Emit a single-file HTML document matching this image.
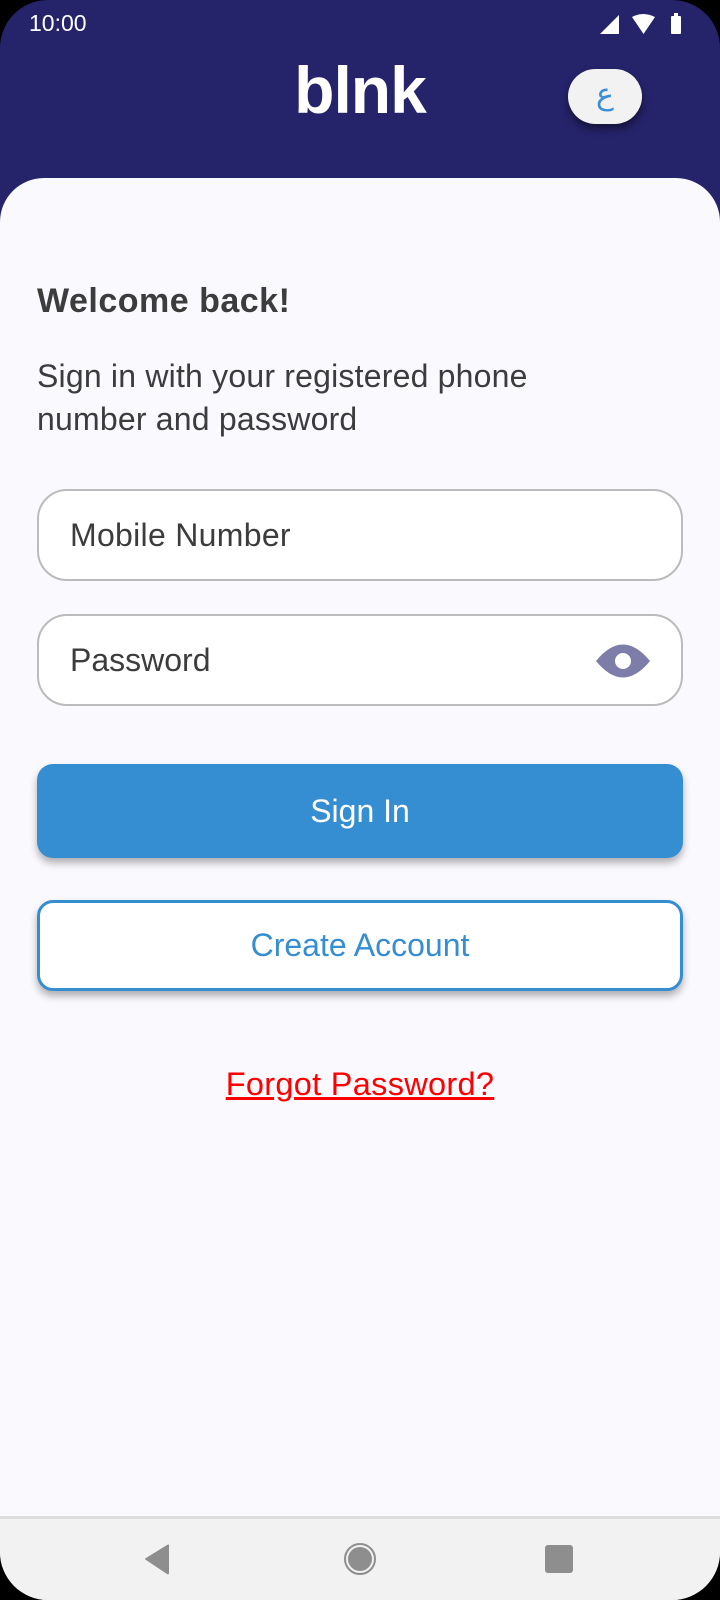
<!DOCTYPE html>
<html><head><meta charset="utf-8"><style>
*{margin:0;padding:0;box-sizing:border-box}
body{width:720px;height:1600px;overflow:hidden;background:#000;font-family:"Liberation Sans",sans-serif}
.screen{position:relative;width:720px;height:1600px;background:#25236a;border-radius:48px 48px 48px 48px;overflow:hidden}
.time{position:absolute;left:29px;top:10px;color:#fff;font-size:23px}
.card{position:absolute;left:0;top:178px;width:720px;height:1422px;background:#f9f9fe;border-radius:44px 44px 0 0}
.logo{position:absolute;left:0;width:720px;top:52px;text-align:center;color:#fff;font-size:66px;font-weight:bold;letter-spacing:-1px}
.lang{position:absolute;left:568px;top:69px;width:74px;height:55px;border-radius:28px;background:#f2f2f2;box-shadow:0 5px 8px rgba(0,0,0,.45);color:#3a8ed6;font-size:30px;text-align:center;line-height:52px;font-family:"DejaVu Sans",sans-serif}
.t{position:absolute;left:37px;color:#3c3c3c}
.inp{position:absolute;left:37px;width:646px;height:92px;border:2px solid #bbb;border-radius:30px;background:#fff;font-size:32px;color:#3c3c3c;padding-left:31px;line-height:88px}
.btn{position:absolute;left:37px;width:646px;border-radius:16px;text-align:center;font-size:32px}
.nav{position:absolute;left:0;top:1516px;width:720px;height:84px;background:#f2f2f2;border-top:3px solid #ddd}
</style></head><body><div class="screen">
<div class="time">10:00</div>
<svg style="position:absolute;left:598px;top:13px" width="86" height="22" viewBox="0 0 86 22">
<polygon points="2,21 21,2 21,21" fill="#fff"/>
<path d="M34 4 Q45 -2 57 4 L45.5 21 Z" fill="#fff"/>
<rect x="73" y="3" width="10" height="18" rx="1" fill="#fff"/><rect x="76" y="0" width="4" height="4" fill="#fff"/>
</svg>
<div class="logo">blnk</div>
<div class="lang">ع</div>
<div class="card"></div>
<div class="t" style="top:282px;font-size:34px;font-weight:bold;color:#3c3c3c;letter-spacing:0.5px">Welcome back!</div>
<div class="t" style="top:355px;font-size:32px;line-height:43px;letter-spacing:0.2px">Sign in with your registered phone<br>number and password</div>
<div class="inp" style="top:489px;letter-spacing:0.3px">Mobile Number</div>
<div class="inp" style="top:614px">Password
<svg style="position:absolute;left:556px;top:26px" width="56" height="38" viewBox="0 0 56 38"><path d="M1 19 Q28 -14 55 19 Q28 52 1 19Z" fill="#7e7ca8"/><circle cx="28" cy="19" r="8" fill="#fff"/></svg></div>
<div class="btn" style="top:764px;height:94px;background:#368ed2;color:#fff;line-height:94px;box-shadow:0 5px 8px rgba(0,0,0,.3)">Sign In</div>
<div class="btn" style="top:900px;height:91px;background:#fff;border:3px solid #368ed2;color:#368ed2;line-height:85px;box-shadow:0 5px 8px rgba(0,0,0,.3)">Create Account</div>
<div style="position:absolute;left:0;width:720px;top:1066px;text-align:center;color:#f00;font-size:32.5px;letter-spacing:0.3px;text-decoration:underline">Forgot Password?</div>
<div class="nav">
<svg style="position:absolute;left:140px;top:24px" width="440" height="34" viewBox="0 0 440 34">
<path d="M29 2 L29 30 Q29 32 27 31 L6 17 Q4 16 6 15 L27 2 Q29 1 29 2Z" fill="#8e8e8e"/>
<circle cx="220" cy="16" r="15" fill="none" stroke="#8e8e8e" stroke-width="2"/><circle cx="220" cy="16" r="12" fill="#8e8e8e"/>
<rect x="405" y="2" width="28" height="28" rx="3" fill="#8e8e8e"/>
</svg></div>
</div></body></html>
